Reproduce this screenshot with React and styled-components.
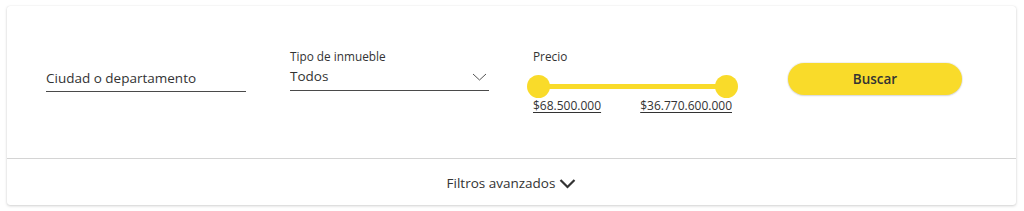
import React from "react";
import styled, { createGlobalStyle } from "styled-components";

const Global = createGlobalStyle`
  html, body { margin: 0; padding: 0; background: #fff; }
  body { font-family: "Open Sans", "Noto Sans", sans-serif; color: #333; }
`;

const Page = styled.div`
  padding: 6px 8px 6px 7px;
`;

const Card = styled.div`
  width: 1009px;
  background: #fff;
  border-radius: 3px;
  box-shadow: 0 1px 3px rgba(0, 0, 0, 0.18), 0 0 1px rgba(0, 0, 0, 0.12);
`;

const TopRow = styled.div`
  display: flex;
  align-items: flex-start;
  height: 153px;
  padding-left: 39px;
  box-sizing: border-box;
  border-bottom: 1px solid #d4d4d4;
`;

const TextField = styled.div`
  width: 200px;
  margin-top: 63px;
  padding-bottom: 3px;
  border-bottom: 1px solid #4a4a4a;
  font-size: 13.5px;
  line-height: 19px;
  color: #333;
`;

const SelectField = styled.div`
  width: 199px;
  margin-top: 42px;
  margin-left: ${(p) => p.$ml}px;
  display: flex;
  flex-direction: column;
`;

const SmallLabel = styled.div`
  font-size: 11.8px;
  line-height: 16px;
  color: #333;
`;

const SelectBox = styled.div`
  display: flex;
  align-items: center;
  justify-content: space-between;
  font-size: 13.5px;
  line-height: 19px;
  padding: 3px 2px 4px 0;
  border-bottom: 1px solid #4a4a4a;
`;

const PriceCol = styled.div`
  width: 199px;
  margin-top: 42px;
  margin-left: 44px;
  display: flex;
  flex-direction: column;
`;

const SliderArea = styled.div`
  position: relative;
  height: 34px;
`;

const Track = styled.div`
  position: absolute;
  left: 5px;
  right: 5px;
  top: 20px;
  height: 5px;
  background: #f9db2a;
`;

const Handle = styled.div`
  position: absolute;
  top: 11px;
  width: 23px;
  height: 23px;
  border-radius: 50%;
  background: #f9db2a;
  ${(p) => (p.$side === "left" ? "left: -6px;" : "right: -6px;")}
`;

const PriceLabels = styled.div`
  display: flex;
  justify-content: space-between;
`;

const PriceValue = styled.span`
  font-size: 12px;
  line-height: 16px;
  color: #333;
  text-decoration: underline;
  text-underline-offset: 2px;
`;

const SearchButton = styled.button`
  margin-top: 57px;
  margin-left: 56px;
  width: 174px;
  height: 32px;
  border: none;
  border-radius: 16px;
  background: #f9db2a;
  box-shadow: 0 0 0 1px rgba(0, 0, 0, 0.05), 0 1px 2px rgba(0, 0, 0, 0.12);
  font-family: "Open Sans", "Noto Sans", sans-serif;
  font-size: 13.5px;
  font-weight: 600;
  color: #333;
  cursor: pointer;
`;

const BottomRow = styled.div`
  height: 46px;
  display: flex;
  align-items: center;
  justify-content: center;
  gap: 4px;
  padding-top: 2px;
  box-sizing: border-box;
  font-size: 13.5px;
  color: #333;
`;

const ThinChevron = () => (
  <svg width="15" height="8" viewBox="0 0 15 8" fill="none">
    <polyline points="1,1 7.5,7 14,1" stroke="#555" strokeWidth="1" />
  </svg>
);

const BoldChevron = () => (
  <svg width="17" height="11" viewBox="0 0 17 11" fill="none">
    <polyline points="1.5,2 8.5,9 15.5,2" stroke="#333" strokeWidth="2.2" />
  </svg>
);

export default function App() {
  return (
    <>
      <Global />
      <Page>
        <Card>
          <TopRow>
            <TextField>Ciudad o departamento</TextField>
            <SelectField $ml={44}>
              <SmallLabel>Tipo de inmueble</SmallLabel>
              <SelectBox>
                <span>Todos</span>
                <ThinChevron />
              </SelectBox>
            </SelectField>
            <PriceCol>
              <SmallLabel>Precio</SmallLabel>
              <SliderArea>
                <Track />
                <Handle $side="left" />
                <Handle $side="right" />
              </SliderArea>
              <PriceLabels>
                <PriceValue>$68.500.000</PriceValue>
                <PriceValue>$36.770.600.000</PriceValue>
              </PriceLabels>
            </PriceCol>
            <SearchButton>Buscar</SearchButton>
          </TopRow>
          <BottomRow>
            <span>Filtros avanzados</span>
            <BoldChevron />
          </BottomRow>
        </Card>
      </Page>
    </>
  );
}
